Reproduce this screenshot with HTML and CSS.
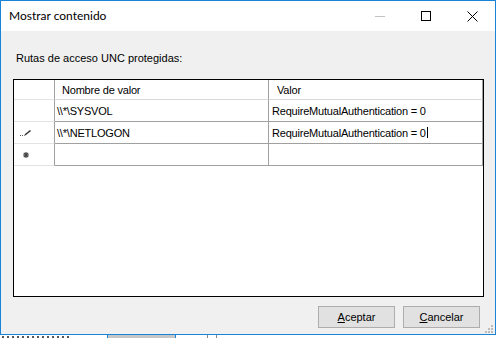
FILE: index.html
```html
<!DOCTYPE html>
<html lang="es">
<head>
    <meta charset="UTF-8">
    <title>Mostrar contenido</title>
    <link rel="stylesheet" href="styles.css">
</head>
<body>
    <div class="window">
        <!-- Title bar -->
        <div class="titlebar">
            <span class="title">Mostrar contenido</span>
            <div class="controls">
                <span class="ctrl">
                    <svg width="10" height="10" viewBox="0 0 10 10"><line x1="0" y1="5.5" x2="10" y2="5.5" stroke="#c2c2c2" stroke-width="1"/></svg>
                </span>
                <span class="ctrl">
                    <svg width="10" height="10" viewBox="0 0 10 10"><rect x="0.5" y="0.5" width="9" height="9" fill="none" stroke="#000" stroke-width="1"/></svg>
                </span>
                <span class="ctrl">
                    <svg width="11" height="11" viewBox="0 0 11 11"><path d="M0.5 0.5 L10.5 10.5 M10.5 0.5 L0.5 10.5" stroke="#000" stroke-width="1"/></svg>
                </span>
            </div>
        </div>

        <!-- Client area -->
        <div class="client">
            <div class="label">Rutas de acceso UNC protegidas:</div>

            <div class="grid">
                <div class="row head">
                    <div class="rowhdr"></div>
                    <div class="cell c1">Nombre de valor</div>
                    <div class="cell c2">Valor</div>
                </div>
                <div class="row">
                    <div class="rowhdr"></div>
                    <div class="cell c1">\\*\SYSVOL</div>
                    <div class="cell c2">RequireMutualAuthentication = 0</div>
                </div>
                <div class="row">
                    <div class="rowhdr">
                        <svg width="12" height="8" viewBox="0 0 12 8">
                            <rect x="0" y="6" width="1" height="1" fill="#555"/>
                            <rect x="2" y="6" width="1" height="1" fill="#555"/>
                            <path d="M4 7 L5 5 L10 1 L11 2 L6 6 Z" fill="#333"/>
                        </svg>
                    </div>
                    <div class="cell c1">\\*\NETLOGON</div>
                    <div class="cell c2 editing">RequireMutualAuthentication = 0<span class="caret"></span></div>
                </div>
                <div class="row">
                    <div class="rowhdr">
                        <svg class="newrow" width="6" height="6" viewBox="0 0 6 6">
                            <path d="M3 0 V6 M0 3 H6 M0.8 0.8 L5.2 5.2 M5.2 0.8 L0.8 5.2" stroke="#444" stroke-width="1.2"/>
                        </svg>
                    </div>
                    <div class="cell c1"></div>
                    <div class="cell c2"></div>
                </div>
            </div>

            <div class="buttons">
                <button class="button"><u>A</u>ceptar</button>
                <button class="button"><u>C</u>ancelar</button>
            </div>

            <!-- Size grip -->
            <svg class="grip" width="8" height="8" viewBox="0 0 8 8">
                <rect x="6" y="0" width="2" height="2" fill="#bcbcbc"/>
                <rect x="3" y="3" width="2" height="2" fill="#bcbcbc"/>
                <rect x="6" y="3" width="2" height="2" fill="#bcbcbc"/>
                <rect x="0" y="6" width="2" height="2" fill="#bcbcbc"/>
                <rect x="3" y="6" width="2" height="2" fill="#bcbcbc"/>
                <rect x="6" y="6" width="2" height="2" fill="#bcbcbc"/>
            </svg>
        </div>
    </div>

    <!-- Taskbar strip behind the dialog -->
    <div class="behind">
        <span class="frag"></span>
        <span class="tab"></span>
        <span class="sep"></span>
        <span class="sep second"></span>
    </div>
</body>
</html>
```

FILE: styles.css
```css
/* General Styles */
body {
    margin: 0;
    padding: 0;
    width: 496px;
    height: 338px;
    overflow: hidden;
    background-color: #ffffff;
    font-family: "Liberation Sans", Arial, sans-serif;
    font-size: 11px;
    color: #000000;
}

.window {
    height: 335px;
    box-sizing: border-box;
    border: 1px solid #1883d7;
    display: flex;
    flex-direction: column;
}

/* Title bar */
.titlebar {
    height: 30px;
    flex: none;
    background-color: #ffffff;
    display: flex;
    align-items: center;
    justify-content: space-between;
}

.title {
    padding-left: 8px;
    margin-top: -2px;
    font-family: Lato, "Noto Sans", sans-serif;
    font-size: 12px;
    color: #000000;
}

.controls {
    display: flex;
    height: 100%;
}

.ctrl {
    width: 46px;
    display: flex;
    align-items: center;
    justify-content: center;
}

/* Client area */
.client {
    flex: 1;
    position: relative;
    background-color: #f0f0f0;
    padding: 0 11px 0 12px;
    display: flex;
    flex-direction: column;
}

.label {
    height: 48px;
    box-sizing: border-box;
    padding: 21px 0 0 3px;
    line-height: 13px;
}

/* Data grid */
.grid {
    height: 218px;
    box-sizing: border-box;
    border: 1px solid #000000;
    background-color: #ffffff;
}

.row {
    display: grid;
    grid-template-columns: 41px 214px 214px;
    height: 22px;
}

.row.head {
    height: 20px;
}

.rowhdr {
    border-right: 1px solid #a0a0a0;
    border-bottom: 1px solid #e3e3e3;
    display: flex;
    align-items: center;
    padding-left: 6px;
}

.newrow {
    margin-left: 3px;
}

.cell {
    border-right: 1px solid #a0a0a0;
    border-bottom: 1px solid #a0a0a0;
    display: flex;
    align-items: center;
    padding-left: 2px;
    white-space: nowrap;
    overflow: hidden;
    letter-spacing: -0.2px;
}

.cell.c2 {
    padding-left: 3px;
}

.head .cell {
    padding-left: 7px;
    border-bottom-color: #d8d8d8;
}

.head .cell.c2 {
    padding-left: 8px;
}

.caret {
    display: inline-block;
    width: 1px;
    height: 11px;
    margin-left: 1px;
    background-color: #000000;
}

/* Buttons */
.buttons {
    display: flex;
    justify-content: flex-end;
    gap: 8px;
    margin-top: 9px;
    padding-right: 4px;
}

.button {
    width: 77px;
    height: 22px;
    box-sizing: border-box;
    padding: 0;
    background-color: #e1e1e1;
    border: 1px solid #adadad;
    font-family: "Liberation Sans", Arial, sans-serif;
    font-size: 11px;
    color: #000000;
}

.grip {
    position: absolute;
    right: 2px;
    bottom: 1px;
}

/* Strip below the window */
.behind {
    height: 3px;
    position: relative;
}

.frag {
    position: absolute;
    left: 2px;
    width: 70px;
    height: 2px;
    top: 1px;
    background: repeating-linear-gradient(90deg, #555 0 2px, transparent 2px 5px);
}

.tab {
    position: absolute;
    left: 107px;
    width: 67px;
    height: 3px;
    background-color: #c6c6c6;
    border-left: 1px solid #1883d7;
    border-right: 1px solid #1883d7;
}

.sep {
    position: absolute;
    left: 207px;
    width: 1px;
    height: 3px;
    background-color: #888888;
}

.sep.second {
    left: 216px;
}
```
